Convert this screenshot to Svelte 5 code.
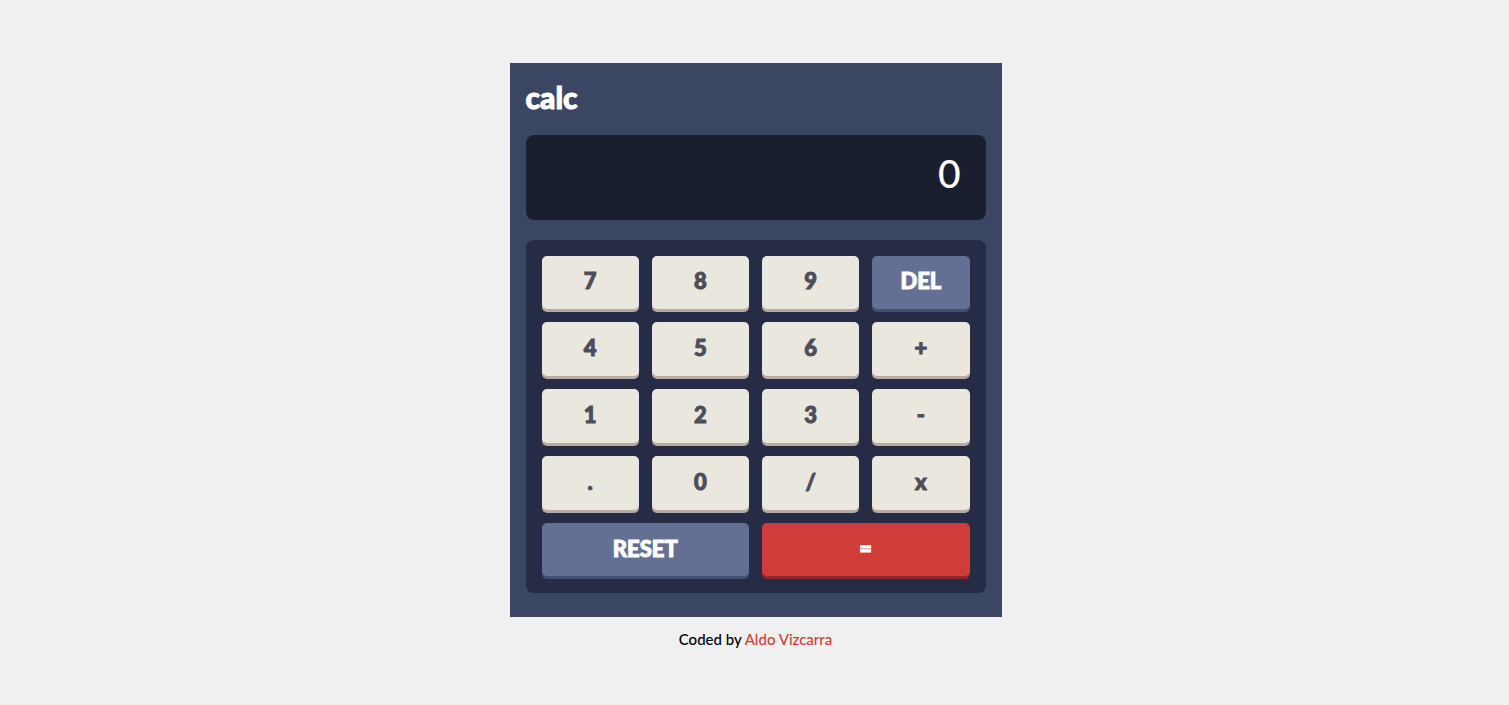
<script>
  const keys = [
    { label: '7' }, { label: '8' }, { label: '9' }, { label: 'DEL', kind: 'alt' },
    { label: '4' }, { label: '5' }, { label: '6' }, { label: '+' },
    { label: '1' }, { label: '2' }, { label: '3' }, { label: '-' },
    { label: '.' }, { label: '0' }, { label: '/' }, { label: 'x' },
    { label: 'RESET', kind: 'alt wide' }, { label: '=', kind: 'equals wide' }
  ];

  let current = $state('0');
  let stored = null;
  let operator = null;
  let fresh = true;

  function compute(a, b, op) {
    if (op === '+') return a + b;
    if (op === '-') return a - b;
    if (op === 'x') return a * b;
    return a / b;
  }

  function resolve() {
    if (operator !== null && !fresh) {
      current = String(compute(stored, Number(current), operator));
    }
    fresh = true;
  }

  function press(label) {
    if (/^\d$/.test(label)) {
      current = fresh || current === '0' ? label : current + label;
      fresh = false;
    } else if (label === '.') {
      if (fresh) current = '0.';
      else if (!current.includes('.')) current += '.';
      fresh = false;
    } else if (label === 'DEL') {
      current = current.length > 1 ? current.slice(0, -1) : '0';
    } else if (label === 'RESET') {
      current = '0';
      stored = null;
      operator = null;
      fresh = true;
    } else if (label === '=') {
      resolve();
      operator = null;
    } else {
      resolve();
      stored = Number(current);
      operator = label;
    }
  }
</script>

<div class="page">
  <main class="calculator">
    <h1>calc</h1>
    <output class="display">{current}</output>
    <div class="keypad">
      {#each keys as key}
        <button type="button" class="key {key.kind ?? ''}" onclick={() => press(key.label)}>{key.label}</button>
      {/each}
    </div>
  </main>
  <footer>Coded by <a href="#author">Aldo Vizcarra</a></footer>
</div>

<style>
  :global(body) {
    margin: 0;
    background: #f0f0f0;
  }

  .page {
    box-sizing: border-box;
    min-height: 100vh;
    padding: 24px 14px 16px 16px;
    display: flex;
    flex-direction: column;
    align-items: center;
    justify-content: center;
    font-family: Lato, "Open Sans", sans-serif;
  }

  .calculator {
    box-sizing: border-box;
    width: 100%;
    max-width: 492px;
    padding: 16px 16px 24px;
    background: #3b4662;
  }

  h1 {
    margin: 0 0 20px;
    font-size: 30px;
    line-height: 36px;
    font-weight: 900;
    color: #fff;
    -webkit-text-stroke: 1px currentColor;
  }

  .display {
    display: block;
    box-sizing: border-box;
    min-height: 85px;
    margin-bottom: 20px;
    padding: 14px 25px 22px;
    overflow: hidden;
    border-radius: 8px;
    background: #1a1f30;
    color: #fff;
    font-size: 39px;
    line-height: 48px;
    font-weight: 500;
    text-align: right;
  }

  .keypad {
    box-sizing: border-box;
    min-height: 353px;
    padding: 16px;
    display: grid;
    grid-template-columns: repeat(4, 1fr);
    grid-template-rows: repeat(5, 1fr);
    gap: 13px;
    border-radius: 8px;
    background: #262c45;
  }

  .key {
    margin: 0;
    padding: 0 0 2px;
    border: 0;
    border-radius: 5px;
    background: #eae7de;
    box-shadow: 0 3px 0 #b8aaa2;
    color: #4d4e58;
    font-family: inherit;
    font-size: 22px;
    line-height: 28px;
    font-weight: 900;
    cursor: pointer;
    -webkit-text-stroke: 1px currentColor;
  }

  .key:hover {
    filter: brightness(1.1);
  }

  .alt {
    background: #637094;
    box-shadow: 0 3px 0 #415072;
    color: #fff;
  }

  .equals {
    background: #d03c37;
    box-shadow: 0 3px 0 #8b2a28;
    color: #fff;
  }

  .wide {
    grid-column: span 2;
  }

  footer {
    padding-top: 10px;
    font-size: 15px;
    line-height: 24px;
    font-weight: 500;
    color: #000;
  }

  a {
    color: #d03c37;
    text-decoration: none;
  }
</style>
